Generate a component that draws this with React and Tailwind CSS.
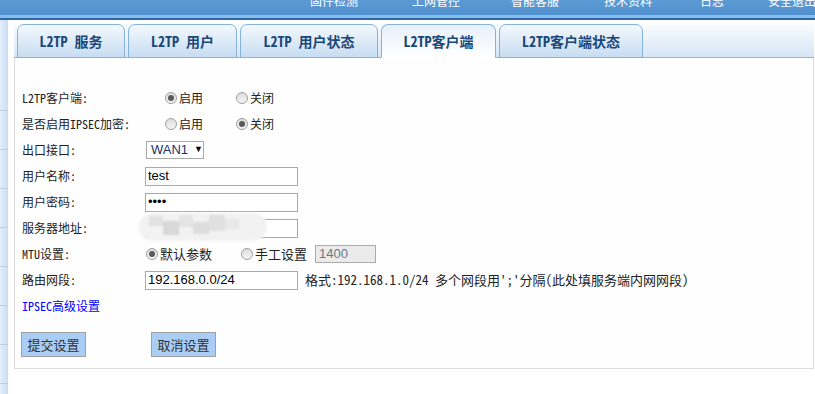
import React from 'react';

const cjk = '"Noto Sans Mono CJK SC", "Noto Sans CJK SC", sans-serif';

const navItems = [
  { label: '固件检测', ml: 'ml-[310px]' },
  { label: '上网管控', ml: 'ml-[54px]' },
  { label: '智能客服', ml: 'ml-[51px]' },
  { label: '技术资料', ml: 'ml-[45px]' },
  { label: '日志', ml: 'ml-[48px]' },
  { label: '安全退出', ml: 'ml-[44px]' },
];

const tabs = [
  { label: 'L2TP 服务', w: 'w-[108px]' },
  { label: 'L2TP 用户', w: 'w-[109px]' },
  { label: 'L2TP 用户状态', w: 'w-[138px]' },
  { label: 'L2TP客户端', w: 'w-[115px]', active: true },
  { label: 'L2TP客户端状态', w: 'w-[144px]' },
];

const Radio = ({ checked }) => (
  <span className="flex h-[12px] w-[12px] items-center justify-center rounded-full border border-[#a0a0a0] bg-gradient-to-b from-[#dcdcdc] to-[#f6f6f6]">
    {checked && <span className="h-[6px] w-[6px] rounded-full bg-[#5a5a5a]" />}
  </span>
);

const Row = ({ label, children }) => (
  <div className="flex h-[26px] items-center">
    <span className="w-[123px] shrink-0">{label}</span>
    {children}
  </div>
);

const TextBox = ({ value, type = 'text' }) => (
  <input
    type={type}
    defaultValue={value}
    className="h-[19px] w-[153px] border border-[#a9a9a9] bg-white px-[2px] text-[13px] text-black outline-none"
    style={{ fontFamily: '"Liberation Sans", Arial, sans-serif' }}
  />
);

export default function App() {
  return (
    <div className="relative h-[394px] w-[815px] overflow-hidden bg-white text-[12px] text-[#222]" style={{ fontFamily: cjk }}>
      {/* top navigation, mostly scrolled off */}
      <div className="h-[20px] bg-gradient-to-b from-[#5c9ad4] to-[#4d8dcc]">
        <div className="flex h-[15px] items-start whitespace-nowrap text-[12px] leading-[12px] text-white">
          {navItems.map((n) => (
            <span key={n.label} className={`${n.ml} -mt-[5px] shrink-0`}>{n.label}</span>
          ))}
        </div>
        <div className="h-[3px] bg-[#86bdea]" />
        <div className="h-[2px] bg-[#2f67a8]" />
      </div>

      <div className="flex">
        {/* left strip */}
        <div className="flex h-[374px] w-[8px] flex-col bg-gradient-to-r from-[#e3eefa] to-[#c9ddf3]">
          {[90, 38, 38, 38, 38, 38, 38, 38].map((m, i) => (
            <div key={i} className="h-[1px] w-[8px] bg-[#c3cfdc]" style={{ marginTop: m }} />
          ))}
        </div>

        <div className="ml-[6px] w-[800px]">
          {/* tab strip */}
          <div className="flex h-[38px] items-end gap-[3px] border-b border-[#8fb6dd] bg-gradient-to-b from-[#ffffff] to-[#d6e6f6] pl-[3px]">
            {tabs.map((t) => (
              <div
                key={t.label}
                className={`${t.w} -mb-[1px] flex h-[34px] shrink-0 items-center justify-center rounded-t-[7px] border border-[#86b3de] text-[14px] font-bold text-[#1b4878] ${
                  t.active
                    ? 'border-b-white bg-gradient-to-b from-[#e6f0fa] to-[#ffffff]'
                    : 'bg-gradient-to-b from-[#f3f8fd] to-[#c8ddf2]'
                }`}
              >
                {t.label}
              </div>
            ))}
          </div>

          {/* form panel */}
          <div className="h-[311px] border-x border-b border-[#dcdcdc] bg-[#fefefe] pl-[7px] pt-[27px]">
            <Row label="L2TP客户端:">
              <div className="ml-[20px] flex items-center">
                <Radio checked />
                <span className="ml-[2px]">启用</span>
              </div>
              <div className="ml-[33px] flex items-center">
                <Radio />
                <span className="ml-[2px]">关闭</span>
              </div>
            </Row>
            <Row label="是否启用IPSEC加密:">
              <div className="ml-[20px] flex items-center">
                <Radio />
                <span className="ml-[2px]">启用</span>
              </div>
              <div className="ml-[33px] flex items-center">
                <Radio checked />
                <span className="ml-[2px]">关闭</span>
              </div>
            </Row>
            <Row label="出口接口:">
              <div
                className="ml-[1px] flex h-[18px] w-[58px] items-center border border-[#a9a9a9] bg-white pl-[4px] text-[13px] text-[#1d2f6b]"
                style={{ fontFamily: '"Liberation Sans", Arial, sans-serif' }}
              >
                WAN1
                <span className="ml-[6px] text-[9px] text-black">▼</span>
              </div>
            </Row>
            <Row label="用户名称:">
              <TextBox value="test" />
            </Row>
            <Row label="用户密码:">
              <TextBox value="test" type="password" />
            </Row>
            <Row label="服务器地址:">
              <div className="relative">
                <TextBox value="" />
                {/* blurred-out address */}
                <div className="absolute -left-[6px] -top-[5px] flex h-[28px] w-[128px] overflow-hidden rounded-full bg-[#f2f2f2] blur-[1px]">
                  <div className="ml-[10px] mt-[3px] h-[10px] w-[14px] bg-[#e2e2e2]" />
                  <div className="mt-[8px] h-[14px] w-[16px] bg-[#d8d8d8]" />
                  <div className="mt-[2px] h-[12px] w-[14px] bg-[#e4e4e4]" />
                  <div className="mt-[9px] h-[12px] w-[16px] bg-[#dddddd]" />
                  <div className="mt-[2px] h-[16px] w-[16px] bg-[#e0e0e0]" />
                  <div className="mt-[6px] h-[10px] w-[14px] bg-[#e8e8e8]" />
                </div>
              </div>
            </Row>
            <Row label="MTU设置:">
              <div className="ml-[1px] flex items-center">
                <Radio checked />
                <span className="ml-[2px] text-[13px]">默认参数</span>
              </div>
              <div className="ml-[29px] flex items-center">
                <Radio />
                <span className="ml-[2px] text-[13px]">手工设置</span>
              </div>
              <div
                className="ml-[8px] flex h-[18px] w-[61px] items-center border border-[#ababab] bg-[#ebebeb] pl-[3px] text-[13px] text-[#6b7a8a]"
                style={{ fontFamily: '"Liberation Sans", Arial, sans-serif' }}
              >
                1400
              </div>
            </Row>
            <Row label="路由网段:">
              <TextBox value="192.168.0.0/24" />
              <span className="ml-[7px] text-[13px]">格式:192.168.1.0/24 多个网段用';'分隔(此处填服务端内网网段)</span>
            </Row>
            <div className="flex h-[26px] items-center text-[#0000ff]">IPSEC高级设置</div>

            <div className="mt-[13px] flex">
              <button className="-ml-[1px] h-[25px] w-[65px] border border-[#a0a0a0] bg-[#a9cdf4] text-[13px] text-[#333]">提交设置</button>
              <button className="ml-[65px] h-[25px] w-[65px] border border-[#a0a0a0] bg-[#a9cdf4] text-[13px] text-[#333]">取消设置</button>
            </div>
          </div>
        </div>
      </div>
    </div>
  );
}
